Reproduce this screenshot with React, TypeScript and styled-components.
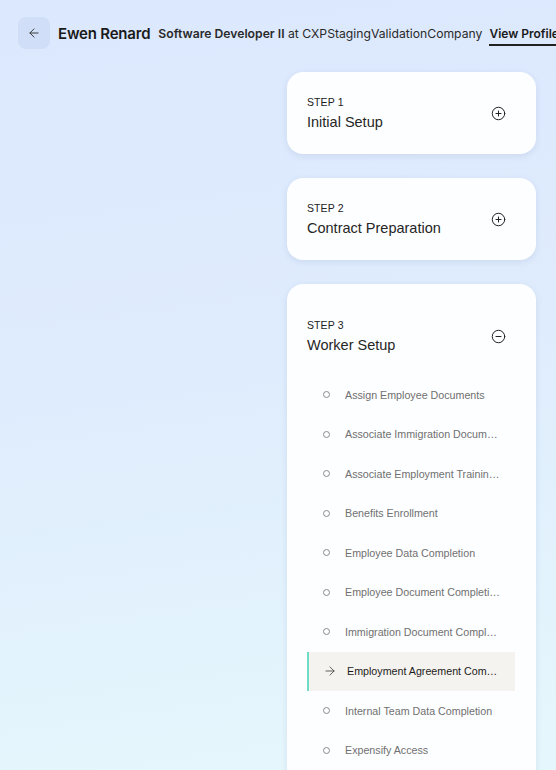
import React from 'react';
import styled, { createGlobalStyle } from 'styled-components';
import { ArrowLeft, ArrowRight, CirclePlus, CircleMinus } from 'lucide-react';

const GlobalStyle = createGlobalStyle`
  html, body {
    margin: 0;
    padding: 0;
    overflow: hidden;
  }
  body {
    font-family: "Liberation Sans", Arial, sans-serif;
    background: linear-gradient(172deg, #dce8fd 0%, #dfecfd 45%, #e6f8fc 100%);
    min-height: 100vh;
  }
`;

const Page = styled.div`
  min-height: 770px;
  padding-top: 17px;
`;

const Header = styled.header`
  display: flex;
  align-items: center;
  gap: 8px;
  padding-left: 18px;
  white-space: nowrap;
  font-family: Inter, "Liberation Sans", sans-serif;
  color: #1a1a1a;
`;

const BackButton = styled.button`
  width: 32px;
  height: 32px;
  border: none;
  border-radius: 8px;
  background: #d0def7;
  display: flex;
  align-items: center;
  justify-content: center;
  color: #333;
  padding: 0;
  flex-shrink: 0;
`;

const Name = styled.span`
  font-size: 15px;
  font-weight: 600;
  letter-spacing: -0.2px;
`;

const Subtitle = styled.span`
  font-size: 12.2px;
  color: #2a2a2a;

  b {
    font-weight: 600;
  }
`;

const ProfileLink = styled.a`
  font-size: 12px;
  font-weight: 600;
  color: #1a1a1a;
  text-decoration: none;
  border-bottom: 2px solid #222;
  padding-bottom: 3px;
  margin-top: 5px;
  margin-left: -1px;
`;

const Main = styled.main`
  display: grid;
  grid-template-columns: 1fr 249px;
  padding: 23px 20px 0;
`;

const Steps = styled.div`
  grid-column: 2;
  display: flex;
  flex-direction: column;
  gap: 24px;
`;

const Card = styled.section<{ $open?: boolean }>`
  background: #fdfeff;
  border-radius: 16px;
  box-shadow: 0 2px 6px rgba(120, 140, 180, 0.18);
  padding: ${(p) => (p.$open ? '34px 21px 0 20px' : '23px 21px 23px 20px')};
`;

const CardHead = styled.div`
  display: flex;
  align-items: center;
  justify-content: space-between;
  padding-right: 9px;
  color: #222;
`;

const StepLabel = styled.div`
  font-size: 10.5px;
  line-height: 14px;
  letter-spacing: 0.1px;
  margin-bottom: 4px;
  color: #222;
`;

const StepTitle = styled.div`
  font-size: 14.5px;
  line-height: 18px;
  color: #262626;
`;

const TaskList = styled.ul`
  list-style: none;
  margin: 21px 0 0;
  padding: 0;
`;

const Task = styled.li<{ $active?: boolean }>`
  display: flex;
  align-items: center;
  height: 39.5px;
  padding-left: ${(p) => (p.$active ? '14px' : '16px')};
  padding-right: 14px;
  border-left: ${(p) => (p.$active ? '2px solid #6fdcc6' : 'none')};
  background: ${(p) => (p.$active ? '#f5f3ef' : 'transparent')};
  font-size: 10.7px;
  color: ${(p) => (p.$active ? '#1c1c1c' : '#707070')};
`;

const Bullet = styled.span`
  width: 5px;
  height: 5px;
  border: 1px solid #8a8a8a;
  border-radius: 50%;
  flex-shrink: 0;
  margin-right: 15px;
`;

const ArrowBox = styled.span`
  display: flex;
  color: #333;
  margin-right: 10px;
`;

const TaskText = styled.span`
  overflow: hidden;
  text-overflow: ellipsis;
  white-space: nowrap;
  max-width: 156px;
`;

const tasks = [
  'Assign Employee Documents',
  'Associate Immigration Documents',
  'Associate Employment Training Documents',
  'Benefits Enrollment',
  'Employee Data Completion',
  'Employee Document Completion',
  'Immigration Document Completion',
  'Employment Agreement Completion',
  'Internal Team Data Completion',
  'Expensify Access',
  'Hardware Request',
];

const App: React.FC = () => {
  const activeIndex = 7;

  return (
    <Page>
      <GlobalStyle />
      <Header>
        <BackButton aria-label="Back">
          <ArrowLeft size={14} strokeWidth={1.6} />
        </BackButton>
        <Name>Ewen Renard</Name>
        <Subtitle>
          <b>Software Developer II</b> at CXPStagingValidationCompany
        </Subtitle>
        <ProfileLink href="#">View Profile</ProfileLink>
      </Header>

      <Main>
        <Steps>
          <Card>
            <CardHead>
              <div>
                <StepLabel>STEP 1</StepLabel>
                <StepTitle>Initial Setup</StepTitle>
              </div>
              <CirclePlus size={15} strokeWidth={1.6} />
            </CardHead>
          </Card>

          <Card>
            <CardHead>
              <div>
                <StepLabel>STEP 2</StepLabel>
                <StepTitle>Contract Preparation</StepTitle>
              </div>
              <CirclePlus size={15} strokeWidth={1.6} />
            </CardHead>
          </Card>

          <Card $open>
            <CardHead>
              <div>
                <StepLabel>STEP 3</StepLabel>
                <StepTitle>Worker Setup</StepTitle>
              </div>
              <CircleMinus size={15} strokeWidth={1.6} />
            </CardHead>
            <TaskList>
              {tasks.map((t, i) => (
                <Task key={t} $active={i === activeIndex}>
                  {i === activeIndex ? (
                    <ArrowBox>
                      <ArrowRight size={14} strokeWidth={1.3} />
                    </ArrowBox>
                  ) : (
                    <Bullet />
                  )}
                  <TaskText>{t}</TaskText>
                </Task>
              ))}
            </TaskList>
          </Card>
        </Steps>
      </Main>
    </Page>
  );
};

export default App;
